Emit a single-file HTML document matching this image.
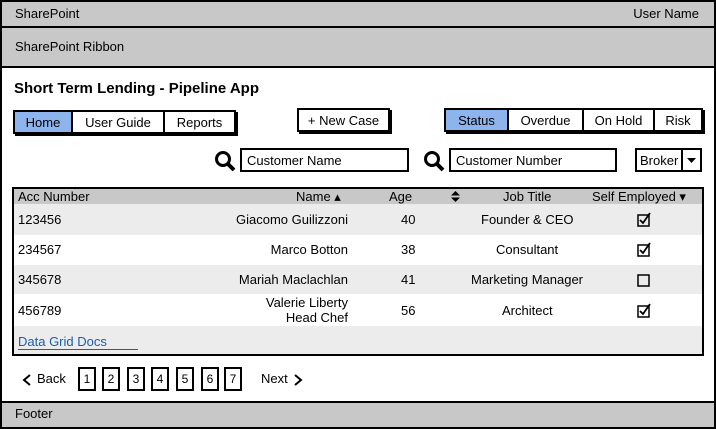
<!DOCTYPE html><html><head><meta charset="utf-8"><style>
*{box-sizing:border-box;margin:0;padding:0}
body{width:716px;height:429px;position:relative;font-family:"Liberation Sans",sans-serif;font-size:13px;color:#000;background:#fff;overflow:hidden}
.a{position:absolute}
.bx{position:absolute;border:2px solid #000;background:#fff;box-shadow:2px 2px 0 #000;display:flex;align-items:center;justify-content:center;font-size:13px}
.seg{position:absolute;display:flex;border:2px solid #000;box-shadow:2px 2px 0 #000;height:24px}
.seg div{display:flex;align-items:center;justify-content:center;border-right:2px solid #000;background:#fff}
.seg div:last-child{border-right:none}
.seg .on{background:#8eb4ee}
.inp{position:absolute;border:2px solid #000;background:#fff;height:24px;padding-left:5px;display:flex;align-items:center}
.row{position:absolute;left:14px;width:688px}
.t{position:absolute;font-size:13px}
.pg{position:absolute;top:367px;width:18px;height:24px;border:2px solid #000;display:flex;align-items:center;justify-content:center;font-size:12px}
</style></head><body>
<div class="a" style="left:0;top:0;width:716px;height:429px;border:2px solid #000"></div>
<div class="a" style="left:0;top:0;width:716px;height:28px;background:#c8c8c8;border:2px solid #000"></div>
<div class="t" style="left:15px;top:6px">SharePoint</div>
<div class="t" style="right:17px;top:6px">User Name</div>
<div class="a" style="left:0;top:26px;width:716px;height:42px;background:#c8c8c8;border:2px solid #000"></div>
<div class="t" style="left:15px;top:39px">SharePoint Ribbon</div>
<div class="t" style="left:14px;top:80px;font-size:15px;font-weight:bold">Short Term Lending - Pipeline App</div>
<div class="seg" style="left:13px;top:110px"><div class="on" style="width:58px">Home</div><div style="width:92px">User Guide</div><div style="width:69px">Reports</div></div>
<div class="bx" style="left:297px;top:108px;width:93px;height:24px">+ New Case</div>
<div class="seg" style="left:444px;top:108px"><div class="on" style="width:63px">Status</div><div style="width:75px">Overdue</div><div style="width:71px">On Hold</div><div style="width:46px">Risk</div></div>
<svg class="a" style="left:214px;top:149px" width="24" height="24"><circle cx="9" cy="10" r="6.5" stroke="#000" stroke-width="3" fill="none"/><path d="M14 15 L20 21" stroke="#000" stroke-width="4"/></svg>
<div class="inp" style="left:240px;top:148px;width:169px">Customer Name</div>
<svg class="a" style="left:423px;top:149px" width="24" height="24"><circle cx="9" cy="10" r="6.5" stroke="#000" stroke-width="3" fill="none"/><path d="M14 15 L20 21" stroke="#000" stroke-width="4"/></svg>
<div class="inp" style="left:449px;top:148px;width:168px">Customer Number</div>
<div class="inp" style="left:635px;top:148px;width:67px;padding-left:3px">Broker<div style="position:absolute;left:44px;top:0;bottom:0;border-left:2px solid #000;width:19px"></div><svg class="a" style="left:50px;top:8px" width="10" height="6"><path d="M0 0H9L4.5 5Z"/></svg></div>
<div class="a" style="left:12px;top:187px;width:692px;height:169px;border:2px solid #000;background:#fff"></div>
<div class="row" style="top:189px;height:15px;background:#c8c8c8"></div>
<div class="row" style="top:204px;height:31px;background:#ececec"></div>
<div class="row" style="top:265px;height:29px;background:#ececec"></div>
<div class="row" style="top:326px;height:28px;background:#ececec"></div>
<div class="t" style="left:18px;top:189px">Acc Number</div>
<div class="t" style="left:296px;top:189px">Name ▴</div>
<div class="t" style="left:389px;top:189px">Age</div>
<svg class="a" style="left:451px;top:191px" width="10" height="11"><path d="M0 4.5H9L4.5 0Z M0 6.5H9L4.5 11Z"/></svg>
<div class="t" style="left:503px;top:189px">Job Title</div>
<div class="t" style="left:592px;top:189px">Self Employed ▾</div>
<div class="t" style="left:18px;top:212px">123456</div><div class="t" style="right:368px;top:212px">Giacomo Guilizzoni</div><div class="t" style="left:401px;top:212px">40</div><div class="t" style="left:481px;top:212px">Founder &amp; CEO</div>
<div class="t" style="left:18px;top:242px">234567</div><div class="t" style="right:368px;top:242px">Marco Botton</div><div class="t" style="left:401px;top:242px">38</div><div class="t" style="left:496px;top:242px">Consultant</div>
<div class="t" style="left:18px;top:272px">345678</div><div class="t" style="right:368px;top:272px">Mariah Maclachlan</div><div class="t" style="left:401px;top:272px">41</div><div class="t" style="left:471px;top:272px">Marketing Manager</div>
<div class="t" style="left:18px;top:303px">456789</div><div class="t" style="right:368px;top:295px;text-align:right;line-height:15px">Valerie Liberty<br>Head Chef</div><div class="t" style="left:401px;top:303px">56</div><div class="t" style="left:502px;top:303px">Architect</div>
<svg class="a" style="left:637px;top:242px" width="16" height="16"><rect x="1" y="3" width="11" height="11" fill="none" stroke="#000" stroke-width="1.5"/><path d="M3 8L6 11L13 1" fill="none" stroke="#000" stroke-width="1.8"/></svg>
<svg class="a" style="left:637px;top:212px" width="16" height="16"><rect x="1" y="3" width="11" height="11" fill="none" stroke="#000" stroke-width="1.5"/><path d="M3 8L6 11L13 1" fill="none" stroke="#000" stroke-width="1.8"/></svg>
<svg class="a" style="left:637px;top:272px" width="16" height="16"><rect x="1" y="3" width="11" height="11" fill="none" stroke="#000" stroke-width="1.5"/></svg>
<svg class="a" style="left:637px;top:303px" width="16" height="16"><rect x="1" y="3" width="11" height="11" fill="none" stroke="#000" stroke-width="1.5"/><path d="M3 8L6 11L13 1" fill="none" stroke="#000" stroke-width="1.8"/></svg>
<div class="t" style="left:18px;top:334px;color:#1a5fa8;border-bottom:1px solid #1a5fa8;width:120px">Data Grid Docs</div>
<svg class="a" style="left:22px;top:374px" width="10" height="12"><path d="M8 1L2 6L8 11" fill="none" stroke="#000" stroke-width="2"/></svg>
<div class="t" style="left:37px;top:371px">Back</div>
<div class="pg" style="left:78px">1</div><div class="pg" style="left:102px">2</div><div class="pg" style="left:127px">3</div><div class="pg" style="left:151px">4</div><div class="pg" style="left:176px">5</div><div class="pg" style="left:201px">6</div><div class="pg" style="left:224px">7</div>
<div class="t" style="left:261px;top:371px">Next</div>
<svg class="a" style="left:293px;top:374px" width="10" height="12"><path d="M2 1L8 6L2 11" fill="none" stroke="#000" stroke-width="2"/></svg>
<div class="a" style="left:0;top:401px;width:716px;height:28px;background:#c8c8c8;border:2px solid #000"></div>
<div class="t" style="left:15px;top:406px">Footer</div>
</body></html>
